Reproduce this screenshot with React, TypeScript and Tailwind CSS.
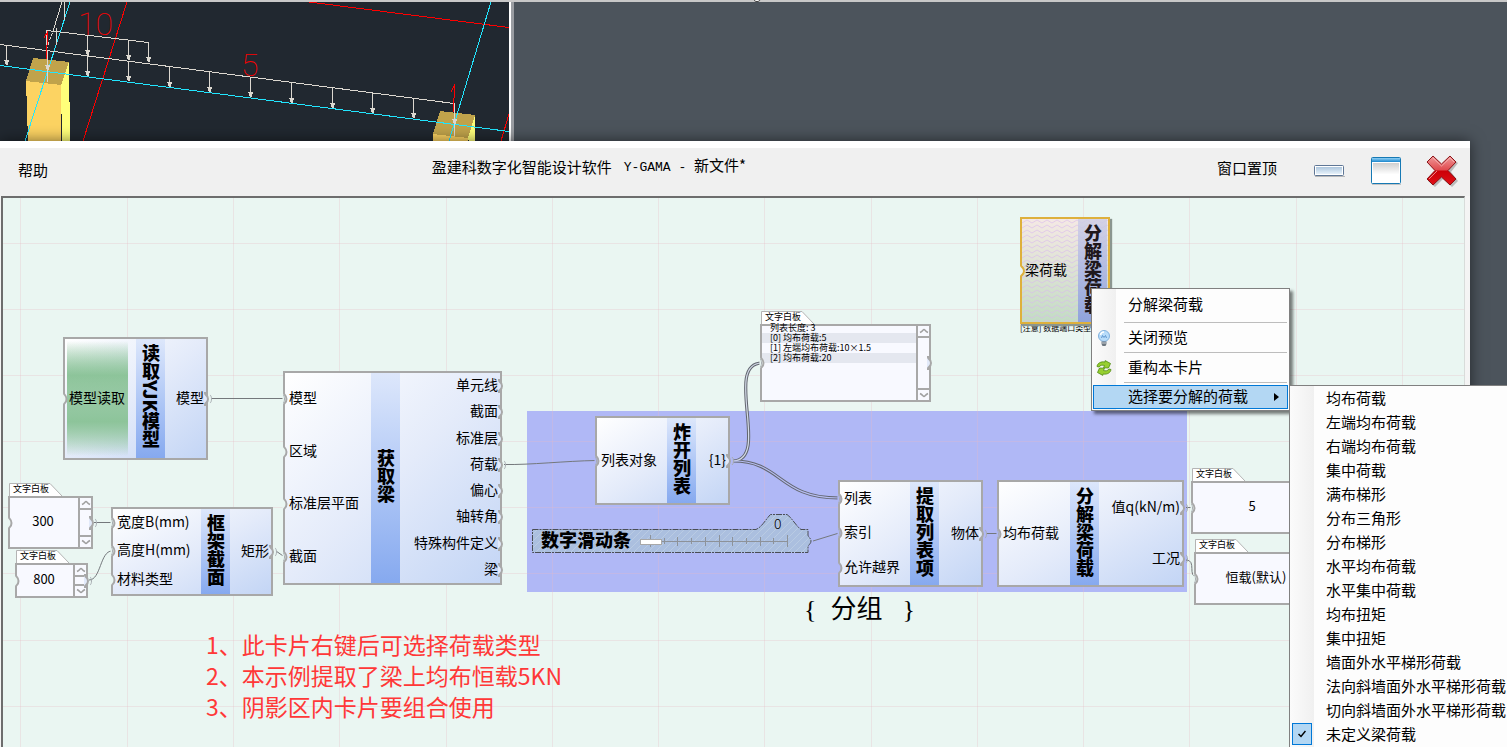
import React from "react";

const SANS = "font-['Noto_Sans_CJK_SC','Noto_Sans',sans-serif]";

/* ---------- model viewport ---------- */

const beamArrows: [number, number, number][] = [
  [6, 45, 65],
  [47, 50, 70],
  [87, 36, 55],
  [87, 56, 76],
  [128, 41, 60],
  [128, 61, 81],
  [148, 43, 62],
  [169, 67, 87],
  [209, 72, 92],
  [250, 77, 97],
  [291, 83, 103],
  [332, 88, 108],
  [372, 93, 113],
  [413, 98, 118],
  [454, 103, 124],
];

function ModelView() {
  return (
    <div className="h-full w-[514px] shrink-0 border-r-[3px] border-[#9a9da2] bg-[#212830]">
      <svg
        className="block h-full w-full border-r-2 border-white"
        viewBox="0 2 509 139"
        preserveAspectRatio="none"
        shapeRendering="crispEdges"
        role="img"
        aria-label="梁荷载模型"
      >
        <polygon points="33,58 69,62 61,85 26,81" fill="#c0a34b" />
        <polygon points="26,81 61,85 61,141 28,141" fill="#fcd362" />
        <polygon points="61,85 69,62 70,141 62,141" fill="#ffff7a" />
        <polygon points="440,111 475,115 468,138 433,134" fill="#c0a34b" />
        <polygon points="433,134 468,138 468,141 433,141" fill="#fcd362" />
        <polygon points="468,138 475,115 475,141 469,141" fill="#ffff7a" />
        <g stroke="#ff0000" fill="none">
          <path d="M127 2L83 141M309 2L509 27.5M509 114L501 141" />
        </g>
        <g stroke="#22e6ff" fill="none">
          <path d="M0 65.5L509 131.5M70 2L25 141M491 2L449 141" />
        </g>
        <g stroke="#dcd8d0" fill="none">
          <path d="M0 44.5L454 103.5V136M46.500 50V30.500L56 31.500L148.500 42.500V62M62 2L54 28M64.500 2V20M56.500 28V45M47.500 50V82" />
          <path d="M54 28L47 48" strokeDasharray="3 2" />
          {beamArrows.map(([x, a, b], i) => (
            <path key={i} d={`M${x + 0.5} ${a}V${b}`} />
          ))}
        </g>
        <g fill="#dcd8d0">
          {beamArrows.map(([x, , b], i) => (
            <path key={i} d={`M${x - 2} ${b - 5}H${x + 3}L${x + 2} ${b}H${x}z`} />
          ))}
        </g>
        <g
          fill="#ff0000"
          shapeRendering="auto"
          className="font-['Roboto','Noto_Sans',sans-serif] font-thin"
        >
          <text x="78" y="35" fontSize="32">
            10
          </text>
          <text x="241" y="76" fontSize="32">
            5
          </text>
        </g>
        <g stroke="#ff0000" fill="none">
          <path d="M44 38L48 31L46 59M451 92L455 84L453 112" />
        </g>
      </svg>
    </div>
  );
}

/* ---------- node cards ---------- */

type Side = "left" | "right";

function Notch({ side, outside, linked }: { side: Side; outside: string; linked?: boolean }) {
  return (
    <svg
      width="10"
      height="14"
      viewBox="0 0 10 14"
      aria-hidden="true"
      className={
        side === "left"
          ? "absolute top-1/2 -left-[5px] -mt-[7px]"
          : "absolute top-1/2 -right-[7px] -mt-[7px]"
      }
    >
      {side === "left" ? (
        <>
          <path d="M2.500 1H4C5 3 7 3 7 7S5 11 4 13H2.500z" fill={outside} />
          <path d="M4 0V1.500C4 3 6.500 3 6.500 7S4 11 4 12.500V14" fill="none" stroke="#a8a8a8" strokeWidth="2" />
          {linked && <path d="M3 3C5 4 5 10 3 11" fill="none" stroke="#a8adb2" />}
        </>
      ) : (
        <>
          <path d="M1 1H2.500C3 3 5 3 5 7S3 11 2.500 13H1z" fill="#e2eafa" />
          <path d="M2 0V1.500C2 3 5 3 5 7S2 11 2 12.500V14" fill="none" stroke="#a8a8a8" strokeWidth="2" />
          {linked && <path d="M7 3C9 4 9 10 7 11" fill="none" stroke="#a8adb2" />}
        </>
      )}
    </svg>
  );
}

interface PortDef {
  label: string;
  linked?: boolean;
}

function Ports({ side, ports, outside }: { side: Side; ports: PortDef[]; outside: string }) {
  return (
    <ul className="flex h-full flex-col">
      {ports.map((p) => (
        <li
          key={p.label}
          className={
            side === "left"
              ? "relative flex flex-1 items-center pl-1"
              : "relative flex flex-1 items-center justify-end pr-0.5"
          }
        >
          <Notch side={side} outside={outside} linked={p.linked} />
          <span className="relative pb-1 text-sm leading-4 whitespace-nowrap">{p.label}</span>
        </li>
      ))}
    </ul>
  );
}

function Card({
  title,
  place,
  leftWidth,
  inputs,
  outputs,
  outside = "#eaf6f2",
  reader,
}: {
  title: string;
  place: string;
  leftWidth: string;
  inputs: PortDef[];
  outputs: PortDef[];
  outside?: string;
  reader?: boolean;
}) {
  return (
    <section
      aria-label={title}
      className={`absolute flex border-2 border-[#a8a8a8] bg-linear-to-br from-white via-[#e4ebfa] to-[#c3d5f5] ${place}`}
    >
      <div className={`relative shrink-0 ${leftWidth}`}>
        {reader && (
          <div className="absolute inset-y-0.5 left-0.5 w-[61px] bg-linear-to-b from-transparent via-[#8dc49a] via-30% to-transparent">
            <div className="h-full w-full bg-linear-to-b from-transparent via-[#8dc49a] via-70% to-transparent" />
          </div>
        )}
        <Ports side="left" ports={inputs} outside={outside} />
      </div>
      <h2 className="flex w-[29px] shrink-0 items-center justify-center bg-linear-to-b from-[#dde7fb] to-[#86a9ef] pb-1 text-lg leading-[29px] font-black whitespace-nowrap [writing-mode:vertical-rl]">
        {title}
      </h2>
      <div className="min-w-0 flex-1">
        <Ports side="right" ports={outputs} outside={outside} />
      </div>
    </section>
  );
}

function SelectedCard() {
  return (
    <section aria-label="分解梁荷载" className="absolute top-[19px] left-[1017px] w-[90px]">
      <div className="relative flex h-[107px] border-2 border-[#deb03c] bg-linear-to-b from-[#f4e9e4] to-[#c3dcc4] shadow-[2px_2px_1px_#8b9690]">
        <svg className="absolute inset-0 h-full w-full" aria-hidden="true">
          <defs>
            <pattern id="wave" width="10" height="5" patternUnits="userSpaceOnUse">
              <path d="M0 4L5 1L10 4" fill="none" stroke="#d9b8ec" strokeOpacity=".6" />
            </pattern>
          </defs>
          <rect width="100%" height="100%" fill="url(#wave)" />
        </svg>
        <div className="relative w-[56px] shrink-0">
          <svg width="8" height="14" viewBox="0 0 8 14" className="absolute top-1/2 -left-1 -mt-[7px]" aria-hidden="true">
            <path d="M1 1H3C3 3 6 3 6 7S3 11 3 13H1z" fill="#eaf6f2" />
            <path d="M3 0V1.500C3 3 6 3 6 7S3 11 3 12.500V14" fill="none" stroke="#deb03c" strokeWidth="2" />
          </svg>
          <p className="flex h-full items-center pb-1 pl-[3px] text-sm leading-4 whitespace-nowrap">梁荷载</p>
        </div>
        <h2 className="relative flex w-[29px] items-center justify-center bg-linear-to-b from-[#cdcde6]/80 to-[#8296e0]/80 pb-1 text-lg leading-[29px] font-black whitespace-nowrap text-[#20181c] [writing-mode:vertical-rl]">
          分解梁荷载
        </h2>
      </div>
      <p className="text-[8px] leading-[8px] whitespace-nowrap">[注意] 数据端口类型变更</p>
    </section>
  );
}

/* ---------- text boards ---------- */

function Chevron({ up }: { up?: boolean }) {
  return (
    <svg width="10" height="6" viewBox="0 0 10 6" fill="none" stroke="#a0a0a0" strokeWidth="1.500" aria-hidden="true">
      <path d={up ? "M1 4.500C4 3 4 1.500 5 1.500S6 3 9 4.500" : "M1 1.500C4 3 4 4.500 5 4.500S6 3 9 1.500"} />
    </svg>
  );
}

function Board({
  place,
  size,
  scroll,
  input,
  output,
  children,
}: {
  place: string;
  size: string;
  scroll?: boolean;
  input?: boolean;
  output?: boolean;
  children: React.ReactNode;
}) {
  return (
    <section aria-label="文字白板" className={`absolute ${place}`}>
      <div className="relative ml-px h-[13px] w-[54px]">
        <svg className="absolute inset-0" width="54" height="13" viewBox="0 0 54 13" aria-hidden="true">
          <path d="M.5 13V.5H41L53 13" fill="#fff" stroke="#b4b4b4" />
        </svg>
        <h2 className="relative pl-1 text-[9px] leading-3 whitespace-nowrap">文字白板</h2>
      </div>
      <div className={`relative flex border-2 border-[#a8a8a8] bg-[#f8f9ff] ${size}`}>
        <div className="relative min-w-0 flex-1">
          <Notch side="left" outside="#eaf6f2" linked={input} />
          {children}
        </div>
        {scroll && (
          <div className="relative flex w-[13px] shrink-0 flex-col justify-between border-l-2 border-[#a8a8a8]">
            <button type="button" aria-label="向上滚动" className="flex h-3 items-center justify-center border-b-2 border-[#a8a8a8]">
              <Chevron up />
            </button>
            <button type="button" aria-label="向下滚动" className="flex h-3 items-center justify-center border-t-2 border-[#a8a8a8]">
              <Chevron />
            </button>
            <Notch side="right" outside="#eaf6f2" linked={output} />
          </div>
        )}
      </div>
    </section>
  );
}

function Value({ children }: { children: React.ReactNode }) {
  return (
    <p className="flex h-full items-center justify-center pr-0.5 pb-1 text-[13px] leading-4 whitespace-nowrap">
      {children}
    </p>
  );
}

const listLines = ["列表长度: 3", "[0] 均布荷载:5", "[1] 左端均布荷载:10×1.5", "[2] 均布荷载:20"];

/* ---------- slider card ---------- */

const sliderOutline =
  "M.5 15.500H224C230 13 234 5 238.500 .500H255C260 4 264 12 269 15.500H276V21C276 23 279 24 279 27S276 31 276 33V38.500H.5z";

function SliderCard() {
  const ticks = Array.from({ length: 11 }, (_, i) => i);
  return (
    <div className="absolute top-[316px] left-[529px] h-10 w-[281px]">
      <svg className="absolute inset-0" width="281" height="40" viewBox="0 0 281 40" aria-hidden="true">
        <defs>
          <pattern id="hatch" width="7" height="7" patternUnits="userSpaceOnUse">
            <path d="M0 7L7 0" stroke="#c3d3e6" strokeOpacity=".6" fill="none" />
          </pattern>
        </defs>
        <path d={sliderOutline} fill="#abbfdf" />
        <path d={sliderOutline} fill="url(#hatch)" stroke="#4a4e55" strokeDasharray="6 1 2 1" />
        <g stroke="#8d9299">
          <path d="M129 27.500H255" />
          {ticks.map((i) => (
            <path key={i} d={`M${Math.round(118 + i * 13.7) + 0.5} ${i % 5 === 0 ? "21V33" : i % 2 ? "24V30" : "23V32"}`} />
          ))}
        </g>
      </svg>
      <label htmlFor="num" className="absolute top-[13px] left-[9px] text-lg leading-6 font-black">
        数字滑动条
      </label>
      <input
        id="num"
        type="range"
        min={0}
        max={10}
        defaultValue={0}
        className="absolute top-[22px] left-[108px] h-[11px] w-[148px] appearance-none bg-transparent [&::-webkit-slider-thumb]:h-[6px] [&::-webkit-slider-thumb]:w-[22px] [&::-webkit-slider-thumb]:appearance-none [&::-webkit-slider-thumb]:border [&::-webkit-slider-thumb]:border-[#a8a8a8] [&::-webkit-slider-thumb]:bg-white"
      />
      <output htmlFor="num" className="absolute top-px left-[242px] text-sm leading-4 font-light">
        0
      </output>
    </div>
  );
}

/* ---------- canvas ---------- */

const gridX = [20, 127, 233, 339, 446, 552, 658, 764, 871, 977, 1083, 1189, 1296, 1402];
const gridY = [243, 309, 375, 441, 507, 573, 640, 706];
const GROUP = "#b0b8f6";

function Canvas() {
  return (
    <main className="relative mr-[5px] ml-px min-h-0 flex-1 overflow-hidden border-t-2 border-r border-l-2 border-t-[#6d6d6d] border-r-[#d8dcda] border-l-[#6d6d6d] bg-[#eaf6f2]">
      <div className="absolute top-[213px] left-[524px] h-[181px] w-[660px] bg-[#b0b8f6]" />
      <svg
        className="absolute top-0 left-0"
        width="1462"
        height="549"
        viewBox="3 198 1462 549"
        fill="none"
        aria-hidden="true"
      >
        <g stroke="#e8b8c4" strokeOpacity=".3" strokeWidth="1">
          {gridX.map((x) => (
            <path key={x} d={`M${x + 0.5} 198V747`} />
          ))}
          {gridY.map((y) => (
            <path key={y} d={`M3 ${y + 0.5}H1465`} />
          ))}
        </g>
        <g stroke="#74787c">
          <path d="M211 398.500H286M94 522.500H113M89 580C101 580 100 551 112 551M276 551L286 558" />
          <path d="M504 464.500C530 465 565 461 596 460.500M813 541L839 533M986 533.500H999M1186 507.500H1193M1186 560C1197 560 1187 577 1197 577" />
        </g>
        <g stroke="#62666f" strokeWidth="3.200">
          <path d="M733 461C771 460 723 363 762 363M733 461C782 461 778 498 839 498" />
        </g>
        <g strokeWidth="1.200">
          <path d="M733 461C771 460 723 363 762 363" stroke="#d4dbe8" />
          <path d="M733 461C782 461 778 498 839 498" stroke="#b6bdf0" />
        </g>
      </svg>

      <Card
        title="读取YJK模型"
        place="top-[139px] left-[60px] h-[123px] w-[145px]"
        leftWidth="w-[71px]"
        inputs={[{ label: "模型读取" }]}
        outputs={[{ label: "模型", linked: true }]}
        reader
      />
      <Card
        title="获取梁"
        place="top-[173px] left-[280px] h-[214px] w-[219px]"
        leftWidth="w-[86px]"
        inputs={[{ label: "模型", linked: true }, { label: "区域" }, { label: "标准层平面" }, { label: "截面", linked: true }]}
        outputs={[
          { label: "单元线" },
          { label: "截面" },
          { label: "标准层" },
          { label: "荷载", linked: true },
          { label: "偏心" },
          { label: "轴转角" },
          { label: "特殊构件定义" },
          { label: "梁" },
        ]}
      />
      <Card
        title="框架截面"
        place="top-[309px] left-[108px] h-[89px] w-[162px]"
        leftWidth="w-[88px]"
        inputs={[{ label: "宽度B(mm)", linked: true }, { label: "高度H(mm)", linked: true }, { label: "材料类型" }]}
        outputs={[{ label: "矩形", linked: true }]}
      />
      <Card
        title="炸开列表"
        place="top-[218px] left-[592px] h-[89px] w-[135px]"
        leftWidth="w-[70px]"
        inputs={[{ label: "列表对象", linked: true }]}
        outputs={[{ label: "{1}", linked: true }]}
        outside={GROUP}
      />
      <Card
        title="提取列表项"
        place="top-[282px] left-[835px] h-[107px] w-[145px]"
        leftWidth="w-[70px]"
        inputs={[{ label: "列表", linked: true }, { label: "索引", linked: true }, { label: "允许越界" }]}
        outputs={[{ label: "物体", linked: true }]}
        outside={GROUP}
      />
      <Card
        title="分解梁荷载"
        place="top-[282px] left-[994px] h-[107px] w-[187px]"
        leftWidth="w-[71px]"
        inputs={[{ label: "均布荷载", linked: true }]}
        outputs={[{ label: "值q(kN/m)", linked: true }, { label: "工况", linked: true }]}
        outside={GROUP}
      />
      <SelectedCard />
      <SliderCard />

      <Board place="top-[285px] left-[5px]" size="h-[53px] w-[85px]" scroll output>
        <Value>300</Value>
      </Board>
      <Board place="top-[352px] left-[12px]" size="h-[35px] w-[73px]" scroll output>
        <Value>800</Value>
      </Board>
      <Board place="top-[113px] left-[757px]" size="h-[78px] w-[171px]" scroll input>
        <ol className="-mt-[3px]">
          {listLines.map((line) => (
            <li key={line} className="pl-2 text-[9px] leading-[10px] whitespace-nowrap even:bg-[#e4e7ef]">
              {line}
            </li>
          ))}
        </ol>
      </Board>
      <Board place="top-[270px] left-[1188px]" size="h-[53px] w-[124px]" input>
        <Value>5</Value>
      </Board>
      <Board place="top-[341px] left-[1191px]" size="h-[53px] w-[126px]" input>
        <Value>恒载(默认)</Value>
      </Board>

      <p className="absolute top-[394px] left-[801px] flex gap-3.5 font-['Liberation_Serif','Noto_Sans_CJK_SC',serif] text-[26px] leading-9">
        <span>{"{"}</span>
        <span>分组</span>
        <span className="pl-1.5">{"}"}</span>
      </p>

      <ol className="absolute top-[431px] left-[203px] text-[23px] leading-[31px] whitespace-nowrap text-[#ff3838]">
        <li>1、此卡片右键后可选择荷载类型</li>
        <li>2、本示例提取了梁上均布恒载5KN</li>
        <li>3、阴影区内卡片要组合使用</li>
      </ol>
    </main>
  );
}

/* ---------- title bar ---------- */

function TitleBar() {
  return (
    <header className="flex h-[55px] shrink-0 items-start border-t-[7px] border-white bg-[#f0f0f0] text-[15px] leading-5">
      <button type="button" className="mt-3 ml-[18px]">
        帮助
      </button>
      <div className="flex-[383]" />
      <h1 className="mt-[7px] flex items-center gap-3">
        <span>盈建科数字化智能设计软件</span>
        <span>
          <span className="font-['Liberation_Mono',monospace] text-[13px]">Y-GAMA - </span>新文件*
        </span>
      </h1>
      <div className="flex-[470]" />
      <button type="button" className="mt-2.5">
        窗口置顶
      </button>
      <button type="button" aria-label="最小化" className="mt-4 ml-[37px]">
        <svg width="32" height="14" viewBox="0 0 32 14">
          <defs>
            <linearGradient id="min" x1="0" y1="0" x2="0" y2="1">
              <stop offset="0" stopColor="#adc6dd" />
              <stop offset="1" stopColor="#e6f1fa" />
            </linearGradient>
          </defs>
          <path d="M1 12.500H31" stroke="#b8b8b8" />
          <rect x="0.500" y="1.500" width="29" height="10" rx="1" fill="#fff" stroke="#5f7796" />
          <rect x="2" y="3" width="26" height="7" fill="url(#min)" />
        </svg>
      </button>
      <button type="button" aria-label="还原" className="mt-[8px] ml-6">
        <svg width="32" height="30" viewBox="0 0 32 30">
          <defs>
            <linearGradient id="bar" x1="0" y1="0" x2="0" y2="1">
              <stop offset="0" stopColor="#8fd0f5" />
              <stop offset="1" stopColor="#1b86cc" />
            </linearGradient>
            <linearGradient id="pane" x1="0" y1="0" x2="0" y2="1">
              <stop offset="0" stopColor="#cfcfcf" />
              <stop offset=".6" stopColor="#fff" />
            </linearGradient>
          </defs>
          <path d="M2 28.500H31" stroke="#c4c4c4" />
          <rect x="1.500" y="1.500" width="29" height="26" rx="1" fill="#fff" stroke="#1679b4" />
          <rect x="2" y="2" width="28" height="4" fill="url(#bar)" />
          <rect x="3" y="7" width="26" height="19" fill="url(#pane)" />
        </svg>
      </button>
      <button type="button" aria-label="关闭" className="mt-[6px] mr-[11px] ml-[23px]">
        <svg width="34" height="34" viewBox="0 0 34 34">
          <defs>
            <linearGradient id="cross" x1="0" y1="0" x2="0" y2="1">
              <stop offset="0" stopColor="#f09a9a" />
              <stop offset=".48" stopColor="#e04a4e" />
              <stop offset=".52" stopColor="#cc0008" />
              <stop offset="1" stopColor="#e01018" />
            </linearGradient>
          </defs>
          <path
            d="M9 3L17 11L25 3L32 8L25 17L32 26L26 32L17 24L9 32L2 26L10 17L2 8z"
            fill="#777"
            opacity=".45"
            transform="translate(1 1)"
          />
          <path
            d="M8 2L16.500 10L25 2L31 8L23 16.500L31 25L25 31L16.500 23L8 31L2 25L10 16.500L2 8z"
            fill="url(#cross)"
            stroke="#8a1418"
            strokeLinejoin="round"
          />
          <path d="M8 4L16.500 12L25 4L29 8M4 25L12 17" fill="none" stroke="#f8bcbc" strokeOpacity=".7" />
        </svg>
      </button>
    </header>
  );
}

/* ---------- menus ---------- */

function BulbIcon() {
  return (
    <svg width="16" height="18" viewBox="0 0 16 18" aria-hidden="true">
      <circle cx="8" cy="7" r="5.500" fill="#b8dcfa" stroke="#7fb0de" />
      <path d="M4.500 6A3.500 3.500 0 0 1 8 3" stroke="#fff" strokeWidth="1.500" fill="none" />
      <path d="M5.500 9L6.500 6.500L8 8.500L9.500 6.500L10.500 9" stroke="#5f96cf" fill="none" />
      <path d="M5.500 12.500H10.500V15L9.500 17H6.500L5.500 15z" fill="#6d7780" />
      <path d="M5.500 14H10.500" stroke="#c8cfd5" />
    </svg>
  );
}

function RefreshIcon() {
  return (
    <svg width="16" height="16" viewBox="0 0 16 16" aria-hidden="true">
      <g fill="#97cf30" stroke="#4f8a12" strokeWidth=".8" strokeLinejoin="round">
        <path d="M1 6.500C1.500 3 5 1.300 9 2L9.200 .6L14.500 3.500L12.500 8L7.500 7.800L8.500 5.500C6.500 4.800 4 5.200 3 7z" />
        <path d="M15 9.500C14.500 13 11 14.700 7 14L6.800 15.400L1.500 12.500L3.500 8L8.500 8.200L7.500 10.500C9.500 11.200 12 10.800 13 9z" />
      </g>
    </svg>
  );
}

function MenuRow({ icon, label }: { icon?: React.ReactNode; label: string }) {
  return (
    <button type="button" role="menuitem" className="flex h-[29px] w-full items-center text-left">
      <span className="flex w-[22px] shrink-0 justify-center">{icon}</span>
      <span className="pb-0.5 pl-[13px]">{label}</span>
    </button>
  );
}

function ContextMenu() {
  return (
    <div
      role="menu"
      className="absolute top-[288px] left-[1091px] flex w-[199px] flex-col border border-[#808080] bg-[linear-gradient(to_right,#fbfbfb,#f0f0f0_24px,#fdfdfd_24px)] p-px text-[15px] leading-5 shadow-[3px_3px_3px_rgba(0,0,0,0.5)]"
    >
      <div className="pb-[3px]">
        <MenuRow label="分解梁荷载" />
      </div>
      <div className="mr-px ml-[31px] h-px bg-[#bdbdbd]" />
      <MenuRow icon={<BulbIcon />} label="关闭预览" />
      <div className="mr-px ml-[31px] h-px bg-[#bdbdbd]" />
      <MenuRow icon={<RefreshIcon />} label="重构本卡片" />
      <div className="mr-px mb-0.5 ml-[31px] h-px bg-[#bdbdbd]" />
      <button
        type="button"
        role="menuitem"
        aria-haspopup="menu"
        aria-expanded="true"
        className="flex h-6 items-center border border-[#0078d7] bg-[#b3d7f3] pr-2 pl-[34px]"
      >
        <span className="flex-1 pb-0.5 text-left">选择要分解的荷载</span>
        <svg width="5" height="8" viewBox="0 0 5 8" aria-hidden="true">
          <path d="M0 0L5 4L0 8z" />
        </svg>
      </button>
    </div>
  );
}

const loadTypes = [
  "均布荷载",
  "左端均布荷载",
  "右端均布荷载",
  "集中荷载",
  "满布梯形",
  "分布三角形",
  "分布梯形",
  "水平均布荷载",
  "水平集中荷载",
  "均布扭矩",
  "集中扭矩",
  "墙面外水平梯形荷载",
  "法向斜墙面外水平梯形荷载",
  "切向斜墙面外水平梯形荷载",
  "未定义梁荷载",
];

function LoadMenu() {
  return (
    <div
      role="menu"
      className="absolute top-[385px] right-0 bottom-0 left-[1289px] overflow-hidden border-t border-l border-[#808080] bg-[linear-gradient(to_right,#fbfbfb,#f0f0f0_24px,#fdfdfd_24px)] text-[15px] leading-5"
    >
      {loadTypes.map((t) => (
        <button
          key={t}
          type="button"
          role="menuitemcheckbox"
          aria-checked={t === "未定义梁荷载"}
          className="flex h-6 w-full items-center whitespace-nowrap"
        >
          <span className="flex w-6 shrink-0 justify-center">
            {t === "未定义梁荷载" && (
              <span className="flex h-[22px] w-5 items-center justify-center border border-[#0078d7] bg-[#b3d7f3]">
                <svg width="8" height="8" viewBox="0 0 8 8" fill="none" stroke="#000" strokeWidth="1.500" aria-hidden="true">
                  <path d="M.5 4L3 6.500L7.500 1" />
                </svg>
              </span>
            )}
          </span>
          <span className="pl-3">{t}</span>
        </button>
      ))}
    </div>
  );
}

export default function App() {
  return (
    <div
      className={`relative flex h-screen flex-col overflow-hidden bg-[#4c545c] text-black ${SANS}`}
    >
      <div className="h-[141px] shrink-0 border-t-2 border-[#c8c8c8]">
        <ModelView />
      </div>
      <svg className="absolute top-0 left-1/2" width="8" height="2" viewBox="0 0 8 2" aria-hidden="true">
        <path d="M0 0C1 2 5 2 6 0" fill="#fff" stroke="#333" />
      </svg>
      <div className="relative mr-[37px] flex min-h-0 flex-1 flex-col bg-[#f4f4f4] shadow-[0_0_14px_rgba(0,0,0,0.55)]">
        <TitleBar />
        <Canvas />
      </div>
      <ContextMenu />
      <LoadMenu />
    </div>
  );
}
